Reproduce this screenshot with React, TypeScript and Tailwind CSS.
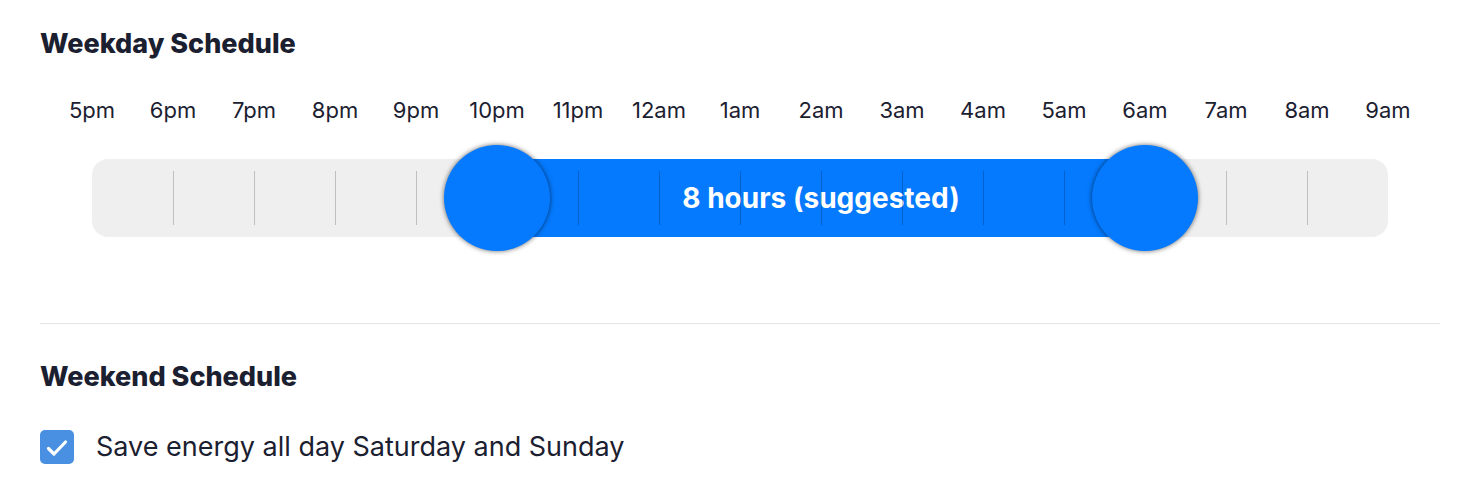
const HOURS = ['5pm', '6pm', '7pm', '8pm', '9pm', '10pm', '11pm', '12am', '1am', '2am', '3am', '4am', '5am', '6am', '7am', '8am', '9am'];
const SEG = 81;
const START = 5; // 10pm
const END = 13; // 6am

export default function App() {
  return (
    <div className="min-h-screen bg-white pl-10 pr-8 pt-7 text-[#1b2030]" style={{ fontFamily: 'Inter, "Noto Sans", sans-serif' }}>
      <h2 className="text-[27px] font-extrabold leading-8">Weekday Schedule</h2>

      {/* Hour labels */}
      <div className="mt-9 ml-[11.5px] flex">
        {HOURS.map((h) => (
          <div key={h} className="w-[81px] shrink-0 text-center text-[22px] leading-7">
            {h}
          </div>
        ))}
      </div>

      {/* Slider track */}
      <div className="relative mx-[52px] mt-[35px] h-[78px] rounded-2xl bg-[#efefef]">
        <div
          className="absolute inset-y-0 bg-[#057afe]"
          style={{ left: START * SEG, width: (END - START) * SEG }}
        >
          <div className="flex h-full items-center justify-center text-[28px] font-bold text-white">
            8 hours (suggested)
          </div>
        </div>

        <div className="absolute inset-0 flex">
          {Array.from({ length: 16 }).map((_, i) => (
            <div key={i} className="flex w-[81px] shrink-0 py-3">
              {i > 0 && <div className="w-px bg-black/20" />}
            </div>
          ))}
        </div>

        <div
          className="absolute top-[-14px] h-[106px] w-[106px] -translate-x-1/2 rounded-full bg-[#057afe] shadow-[0_0_5px_rgba(0,0,0,0.6)]"
          style={{ left: START * SEG }}
        />
        <div
          className="absolute top-[-14px] h-[106px] w-[106px] -translate-x-1/2 rounded-full bg-[#057afe] shadow-[0_0_5px_rgba(0,0,0,0.6)]"
          style={{ left: END * SEG }}
        />
      </div>

      <div className="mt-[86px] border-t border-[#e6e6e6]" />

      <h2 className="mt-[37px] text-[27px] font-extrabold leading-8">Weekend Schedule</h2>

      <label className="mt-[37px] flex items-center gap-[22px]">
        <span className="flex h-[34px] w-[34px] items-center justify-center rounded-[5px] bg-[#4a90e2]">
          <svg viewBox="0 0 34 34" className="h-[34px] w-[34px]" fill="none" stroke="white" strokeWidth="3.2" strokeLinecap="round" strokeLinejoin="round">
            <path d="M8.5 18.5 L14 24 L25.5 12" />
          </svg>
        </span>
        <span className="text-[27px] leading-[34px]">Save energy all day Saturday and Sunday</span>
      </label>
    </div>
  );
}
